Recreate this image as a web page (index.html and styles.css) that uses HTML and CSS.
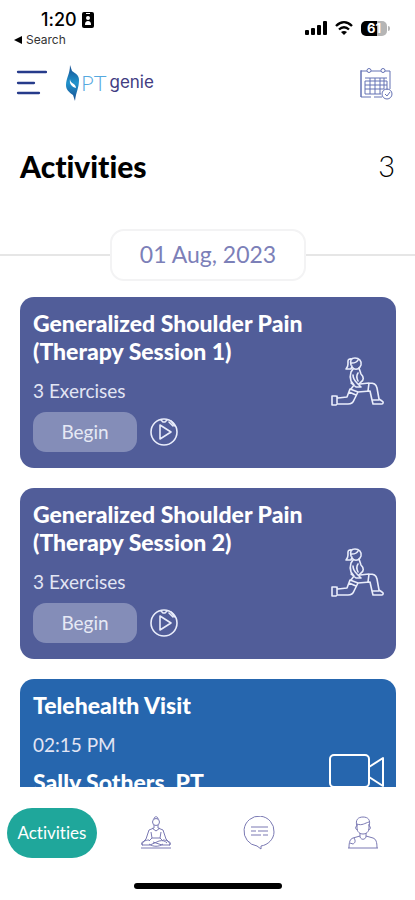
FILE: index.html
```html
<!DOCTYPE html>
<html lang="en">
<head>
<meta charset="utf-8">
<meta name="viewport" content="width=device-width, initial-scale=1">
<title>PT genie – Activities</title>
<link rel="stylesheet" href="styles.css">
</head>
<body>
<svg class="sprite" aria-hidden="true">
  <symbol id="lunge" viewBox="0 0 54 50">
    <path d="M21 9c-1-5 0-7 4-7s7 3 6 7l-1 2c-2 3-6 3-8 0M22 7c3 0 5-1 6-3M22 3c-5-1-4 3-4 5s-1 4-2 5h5l1-3"/>
    <path d="M23 13l-2 3c-1 3-1 6 0 9l3 4-3 4M29 12l2 6c3 3 3 6 0 8l-2 2M23 19c0 4 2 6 4 8l4 4h-5l-5-4M28 17c-2 3-1 6 0 8"/>
    <path d="M30 28l9-1c5 0 7 1 8 5l2 11 3 2c2 1 1 3 0 3h-9l-1-4-2-9-12 1-4 8c-1 3-3 4-6 4H7l-1 1H2v-9h4l2 2 9-1 3-8M39 27l-1 8M7 40v7M20 33l8 3M19 36l7 3M43 44h6"/>
  </symbol>
  <symbol id="play" viewBox="0 0 30 30">
    <circle cx="15" cy="15" r="13"/>
    <path d="M11 8v14l11-7zM12 3l2 2h2l2-2M20 5l4 4M22 4l4 5"/>
  </symbol>
</svg>
<div class="app">
  <div class="status">
    <div class="status-left">
      <div class="clock">1:20
        <svg width="12" height="16" viewBox="0 0 12 16" aria-hidden="true"><rect width="12" height="16" rx="2"/><path fill="#fff" d="M4 1h4v1H4zM3 13c0-3 1-4 3-4s3 1 3 4z"/><circle cx="6" cy="6" r="2" fill="#fff"/></svg>
      </div>
      <a class="back" href="#"><svg width="8" height="8" viewBox="0 0 8 8" aria-hidden="true"><path d="M0 4l8-4v8z"/></svg>Search</a>
    </div>
    <div class="status-right">
      <svg width="22" height="14" viewBox="0 0 22 14" aria-hidden="true"><rect y="9" width="4" height="5" rx="1"/><rect x="6" y="7" width="4" height="7" rx="1"/><rect x="12" y="4" width="4" height="10" rx="1"/><rect x="18" width="4" height="14" rx="1"/></svg>
      <svg width="18" height="14" viewBox="0 0 18 14" aria-hidden="true"><g fill="none" stroke="#000" stroke-width="2.3"><path d="M1 5c5-5 11-5 16 0M4 8.500c3-3 7-3 10 0"/></g><path d="M6 11q3-2 6 0l-3 3z"/></svg>
      <div class="battery"><span>61</span></div>
    </div>
  </div>
  <header class="topbar">
    <button class="icon-btn" aria-label="Menu"><svg width="32" height="26" viewBox="0 0 32 26" fill="none" stroke="#263b8b" stroke-width="2.300" stroke-linecap="round"><path d="M3 2h28M3 13h16M3 23h21"/></svg></button>
    <a class="brand" href="#" aria-label="PT genie">
      <svg width="14" height="36" viewBox="0 0 14 36" aria-hidden="true"><defs><linearGradient id="g" x2="0" y2="1"><stop stop-color="#174c8f"/><stop offset=".5" stop-color="#2093cc"/><stop offset="1" stop-color="#174c8f"/></linearGradient></defs><path fill="url(#g)" d="M4 0l2 6c4 3 7 4 7 9 0 8-3 12-4 21l-2-6C3 27 0 25 0 20c0-7 4-11 4-20z"/><path fill="#fff" d="M4 14c0 5 6 4 6 9-4-1-7-4-6-9z"/></svg>
      <span class="brand-pt">PT</span><span class="brand-name">genie</span>
    </a>
    <button class="icon-btn calendar" aria-label="Calendar">
      <svg width="33" height="33" viewBox="0 0 33 33" fill="none" stroke="#6572b4" stroke-width="1"><path d="M7 4H1v26h10M14 30h8M11 4h10M25 4h5v18M1 3v27M5 11h22M5 14h22v9M5 14v13h16M5 18h22M5 22h19M10 11v16M15 11v16M20 11v16M24 11v11"/><circle cx="9" cy="3.500" r="2"/><circle cx="23" cy="3.500" r="2"/><circle cx="27" cy="27" r="5"/><path d="M25 27l2 2 3-4"/></svg>
    </button>
  </header>
  <div class="heading"><h1>Activities</h1><span class="count">3</span></div>
  <main class="feed">
    <div class="date"><time datetime="2023-08-01">01 Aug, 2023</time></div>
    <article class="card">
      <div class="card-body">
        <h2>Generalized Shoulder Pain<br>(Therapy Session 1)</h2>
        <p class="meta">3 Exercises</p>
        <div class="actions"><button class="begin">Begin</button><button class="icon-btn" aria-label="Play"><svg class="line" width="30" height="30"><use href="#play"/></svg></button></div>
      </div>
      <svg class="line" width="54" height="50" aria-hidden="true"><use href="#lunge"/></svg>
    </article>
    <article class="card">
      <div class="card-body">
        <h2>Generalized Shoulder Pain<br>(Therapy Session 2)</h2>
        <p class="meta">3 Exercises</p>
        <div class="actions"><button class="begin">Begin</button><button class="icon-btn" aria-label="Play"><svg class="line" width="30" height="30"><use href="#play"/></svg></button></div>
      </div>
      <svg class="line" width="54" height="50" aria-hidden="true"><use href="#lunge"/></svg>
    </article>
    <article class="card visit">
      <div class="card-body">
        <h2>Telehealth Visit</h2>
        <p class="meta">02:15 PM</p>
        <h2>Sally Sothers, PT</h2>
      </div>
      <svg class="camera" width="56" height="36" viewBox="0 0 56 36" aria-hidden="true"><rect x="1" y="1" width="39" height="32" rx="4"/><path d="M40 13l14-9v28l-14-9"/></svg>
    </article>
  </main>
  <nav class="tabs">
    <a class="tab active" href="#"><span>Activities</span></a>
    <a class="tab" href="#" aria-label="Wellness">
      <svg width="32" height="34" viewBox="0 0 32 34"><circle cx="16" cy="6" r="3.500"/><path d="M14 3c0-3 4-3 4 0M14 9v3l-5 2-3 9-3 3M18 9v3l5 2 3 9 3 3M11 16l1 6-3 3M21 16l-1 6 3 3M12 12l4 3 4-3M12 22h8M9 24c-4 0-7 2-7 5h8l9-4c4-1 6 0 8 2M23 24c4 0 7 2 7 5h-8l-9-3M3 26c-2 0-2 3 0 3M29 26c2 0 2 3 0 3M9 28c4 3 10 3 14 0M1 32h30"/></svg>
    </a>
    <a class="tab" href="#" aria-label="Messages">
      <svg width="32" height="34" viewBox="0 0 32 34"><path d="M14 30l4 3v-3c7-1 13-7 13-14a15 15 0 1 0-17 14z"/><path d="M8 11h17M8 15h5M15 15h10M8 19h10M20 19h5"/></svg>
    </a>
    <a class="tab" href="#" aria-label="Profile">
      <svg width="32" height="34" viewBox="0 0 32 34"><path d="M10 10C8 4 11 1 16 1s8 3 6 9M10 8c5 2 8-1 12-2M10 8v4c0 8 12 8 12 0V8M10 10c-2 0-2 4 1 4M22 10c2 0 2 4-1 4M13 17v4c1 3 5 3 6 0v-4M13 20l-7 2c-3 1-4 4-4 10M19 20l7 2c3 1 4 4 4 10M7 22c2 3 1 5-1 6l-3-1M1 32h30"/></svg>
    </a>
  </nav>
  <div class="home"></div>
</div>
</body>
</html>
```
FILE: styles.css
```css
* { box-sizing: border-box; }
body { margin: 0; background: #fff; color: #000; font-family: Lato, "Open Sans", sans-serif; font-variant-ligatures: none; }
h1, h2, p { margin: 0; }
a { color: inherit; text-decoration: none; }
button { font: inherit; color: inherit; border: 0; cursor: pointer; }
svg { display: block; flex: none; }
.sprite { display: none; }
.app { height: 100vh; display: flex; flex-direction: column; }

.status { display: flex; justify-content: space-between; padding: 9px 28px 0 14px; height: 54px; font-family: Inter, sans-serif; }
.clock { display: flex; align-items: center; gap: 5px; padding-left: 27px; font-size: 18px; line-height: 22px; font-weight: 500; }
.back { display: flex; align-items: center; gap: 4px; font-size: 12px; line-height: 18px; color: #333; }
.status-right { display: flex; gap: 8px; padding-top: 12px; }
.battery { position: relative; width: 26px; height: 15px; border-radius: 5px; background: linear-gradient(90deg, #000 61%, #b5b5b5 61%); color: #fff; font-size: 13px; line-height: 15px; font-weight: 700; text-align: center; }
.battery::after { content: ""; position: absolute; right: -3px; top: 5px; width: 2px; height: 5px; border-radius: 0 2px 2px 0; background: #b5b5b5; }

.topbar { display: flex; align-items: center; height: 58px; padding: 0 22px 0 15px; }
.icon-btn { padding: 0; background: none; }
.brand { display: flex; align-items: center; margin-left: 19px; }
.brand-pt { margin-left: 1px; font-size: 22px; line-height: 28px; font-weight: 300; color: #55a9df; }
.brand-name { margin-left: 3px; padding-bottom: 3px; font-family: Inter, sans-serif; font-size: 17px; line-height: 24px; color: #413c82; }
.calendar { margin-left: auto; }

.heading { display: flex; align-items: center; justify-content: space-between; height: 110px; padding: 0 20px 2px; }
h1 { font-size: 30px; line-height: 36px; font-weight: 900; }
.count { font-size: 29px; line-height: 36px; font-weight: 300; }

.feed { flex: 1; min-height: 0; overflow: hidden; display: flex; flex-direction: column; gap: 20px; padding: 7px 19px 0 20px; }
.date { display: flex; align-items: center; flex: none; height: 52px; margin: 0 -20px -4px; }
.date::before, .date::after { content: ""; flex: 1; height: 2px; background: #e6e6e6; }
.date time { width: 196px; height: 52px; border: 2px solid #f3f3f4; border-radius: 14px; line-height: 46px; text-align: center; font-size: 23px; color: #7c80b8; }

.card { flex: none; display: flex; align-items: center; justify-content: space-between; padding: 12px 12px 16px 13px; border-radius: 14px; background: #515d99; color: #fff; }
h2 { font-size: 23px; line-height: 28px; font-weight: 900; }
.meta { margin: 12px 0 7px; font-size: 19px; line-height: 28px; color: #e2e5f4; }
.actions { display: flex; align-items: center; gap: 12px; }
.begin { width: 104px; height: 40px; padding: 0 0 2px; border-radius: 13px; background: #848db8; font-size: 19px; color: #e6e9f5; }
.line { fill: none; stroke: #e9edfb; stroke-width: 1.600; stroke-linejoin: round; stroke-linecap: round; }
.visit { align-items: flex-start; padding: 12px 11px 46px 13px; background: #2666ae; }
.visit .meta { margin-bottom: 9px; }
.camera { margin-top: 63px; fill: none; stroke: #fff; stroke-width: 2; stroke-linejoin: round; }

.tabs { flex: none; display: grid; grid-template-columns: repeat(4, 1fr); height: 91px; background: #fff; }
.tab { display: flex; align-items: center; justify-content: center; fill: none; stroke: #7a79b3; stroke-width: 1; }
.active span { width: 90px; border-radius: 25px; background: #1fa79b; color: #fff; font-size: 17px; line-height: 50px; text-align: center; }
.home { flex: none; width: 148px; height: 6px; margin: 5px auto 11px; border-radius: 3px; background: #000; }
```
